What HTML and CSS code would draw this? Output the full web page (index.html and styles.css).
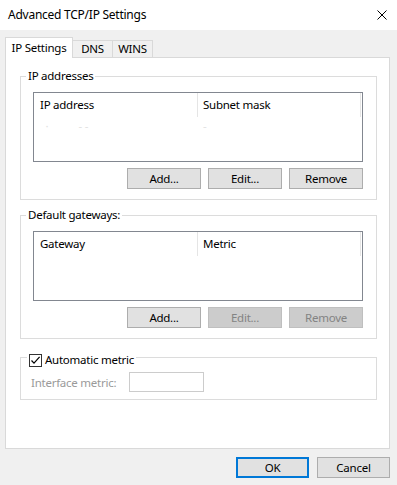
FILE: index.html
```html
<!DOCTYPE html>
<html lang="en">
<head>
    <meta charset="UTF-8">
    <meta name="viewport" content="width=device-width, initial-scale=1.0">
    <title>Advanced TCP/IP Settings</title>
    <link rel="stylesheet" href="styles.css">
</head>
<body>
    <section class="dialog">
        <header class="titlebar">
            <span class="titlebar__text">Advanced TCP/IP Settings</span>
            <span class="titlebar__close">
                <svg width="10" height="10" viewBox="0 0 10 10">
                    <path d="M0.5 0.5 L9.5 9.5 M9.5 0.5 L0.5 9.5" stroke="#000" stroke-width="1" fill="none"/>
                </svg>
            </span>
        </header>

        <nav class="tabs">
            <div class="tab tab--active">IP Settings</div>
            <div class="tab tab--dns">DNS</div>
            <div class="tab tab--wins">WINS</div>
        </nav>

        <main class="panel">
            <div class="group">
                <div class="group__title">IP addresses</div>
                <div class="list">
                    <div class="list__head">
                        <div class="list__col list__col--first">IP address</div>
                        <div class="list__col">Subnet mask</div>
                    </div>
                    <div class="list__row">
                        <div class="list__col list__col--first"><span class="faint">&nbsp;&nbsp;&middot;&nbsp;&nbsp;&nbsp;&nbsp;&nbsp;&nbsp;&nbsp;&nbsp;&nbsp;&nbsp;&nbsp;- -</span></div>
                        <div class="list__col"><span class="faint">-</span></div>
                    </div>
                </div>
                <div class="buttons">
                    <button class="btn">Add...</button>
                    <button class="btn">Edit...</button>
                    <button class="btn">Remove</button>
                </div>
            </div>

            <div class="group group--gateways">
                <div class="group__title">Default gateways:</div>
                <div class="list">
                    <div class="list__head">
                        <div class="list__col list__col--first">Gateway</div>
                        <div class="list__col">Metric</div>
                    </div>
                </div>
                <div class="buttons">
                    <button class="btn">Add...</button>
                    <button class="btn" disabled>Edit...</button>
                    <button class="btn" disabled>Remove</button>
                </div>
            </div>

            <div class="group group--metric">
                <label class="group__title group__title--check">
                    <span class="checkbox">
                        <svg width="13" height="13" viewBox="0 0 13 13">
                            <rect x="0.5" y="0.5" width="12" height="12" fill="#fff" stroke="#333"/>
                            <path d="M2.5 6.5 L5 9.2 L10.6 2.8" stroke="#000" stroke-width="1.2" fill="none"/>
                        </svg>
                    </span>
                    Automatic metric
                </label>
                <div class="metric">
                    <span class="metric__label">Interface metric:</span>
                    <input class="metric__input" type="text" disabled>
                </div>
            </div>
        </main>

        <footer class="footer">
            <button class="btn btn--default">OK</button>
            <button class="btn">Cancel</button>
        </footer>
    </section>
</body>
</html>
```

FILE: styles.css
```css
* {
    margin: 0;
    padding: 0;
    box-sizing: border-box;
}

body {
    background-color: #f0f0f0;
    font-family: 'Noto Sans', 'Open Sans', sans-serif;
    font-size: 11.5px;
    letter-spacing: -0.25px;
    color: #000;
    width: 397px;
    height: 485px;
    overflow: hidden;
}

.dialog {
    display: flex;
    flex-direction: column;
    height: 485px;
}

/* title bar */

.titlebar {
    background-color: #fff;
    height: 30px;
    display: flex;
    align-items: center;
    justify-content: space-between;
    padding: 0 10px 0 8px;
}

.titlebar__text {
    font-size: 12px;
    line-height: 16px;
}

.titlebar__close svg {
    display: block;
}

/* tabs */

.tabs {
    display: flex;
    align-items: flex-end;
    height: 27px;
    padding-left: 5px;
}

.tab {
    background-color: #f0f0f0;
    border: 1px solid #d9d9d9;
    border-bottom: none;
    height: 17px;
    width: 41px;
    line-height: 16px;
    text-align: center;
    margin-left: -1px;
}

.tab--active {
    background-color: #fff;
    height: 21px;
    width: 68px;
    line-height: 19px;
    margin-left: 0;
    margin-bottom: -1px;
    position: relative;
    z-index: 1;
}

/* panel */

.panel {
    background-color: #fff;
    border: 1px solid #d9d9d9;
    height: 392px;
    margin: 0 7px 0 5px;
    padding: 18px 12px 0 14px;
}

.group {
    border: 1px solid #dcdcdc;
    display: flex;
    flex-direction: column;
    padding: 0 13px 10px 12px;
}

.group--gateways {
    margin-top: 15px;
}

.group--metric {
    margin-top: 18px;
    padding: 0 10px 7px 10px;
}

.group__title {
    align-self: flex-start;
    background-color: #fff;
    line-height: 16px;
    margin: -9px 0 0 -7px;
    padding: 0 2px;
}

.group__title--check {
    display: flex;
    align-items: center;
    gap: 3px;
    margin: -6px 0 0 -4px;
}

.checkbox svg {
    display: block;
}

/* list view */

.list {
    background-color: #fff;
    border: 1px solid #828790;
    height: 70px;
    margin-top: 8px;
}

.list__head,
.list__row {
    display: flex;
}

.list__head {
    height: 24px;
}

.list__head .list__col {
    border-right: 1px solid #e5e5e5;
    line-height: 23px;
}

.list__col {
    width: 163px;
    padding-left: 5px;
}

.list__col--first {
    width: 164px;
    padding-left: 6px;
}

.list__row {
    height: 18px;
    line-height: 18px;
}

.faint {
    color: #e2e2e2;
}

/* buttons */

.buttons {
    display: flex;
    justify-content: flex-end;
    gap: 7px;
    margin-top: 6px;
}

.btn {
    background-color: #e1e1e1;
    border: 1px solid #adadad;
    color: #000;
    font-family: inherit;
    font-size: 11.5px;
    letter-spacing: -0.25px;
    height: 21px;
    width: 74px;
}

.btn:disabled {
    background-color: #cccccc;
    border-color: #bfbfbf;
    color: #838383;
}

/* interface metric */

.metric {
    display: flex;
    align-items: center;
    margin-top: 4px;
}

.metric__label {
    color: #9a9a9a;
    width: 98px;
}

.metric__input {
    background-color: #fff;
    border: 1px solid #cccccc;
    height: 20px;
    width: 75px;
}

/* footer */

.footer {
    display: flex;
    justify-content: flex-end;
    gap: 8px;
    padding: 8px 7px 0 0;
}

.footer .btn {
    width: 73px;
}

.btn--default {
    border: 2px solid #0078d7;
}
```
